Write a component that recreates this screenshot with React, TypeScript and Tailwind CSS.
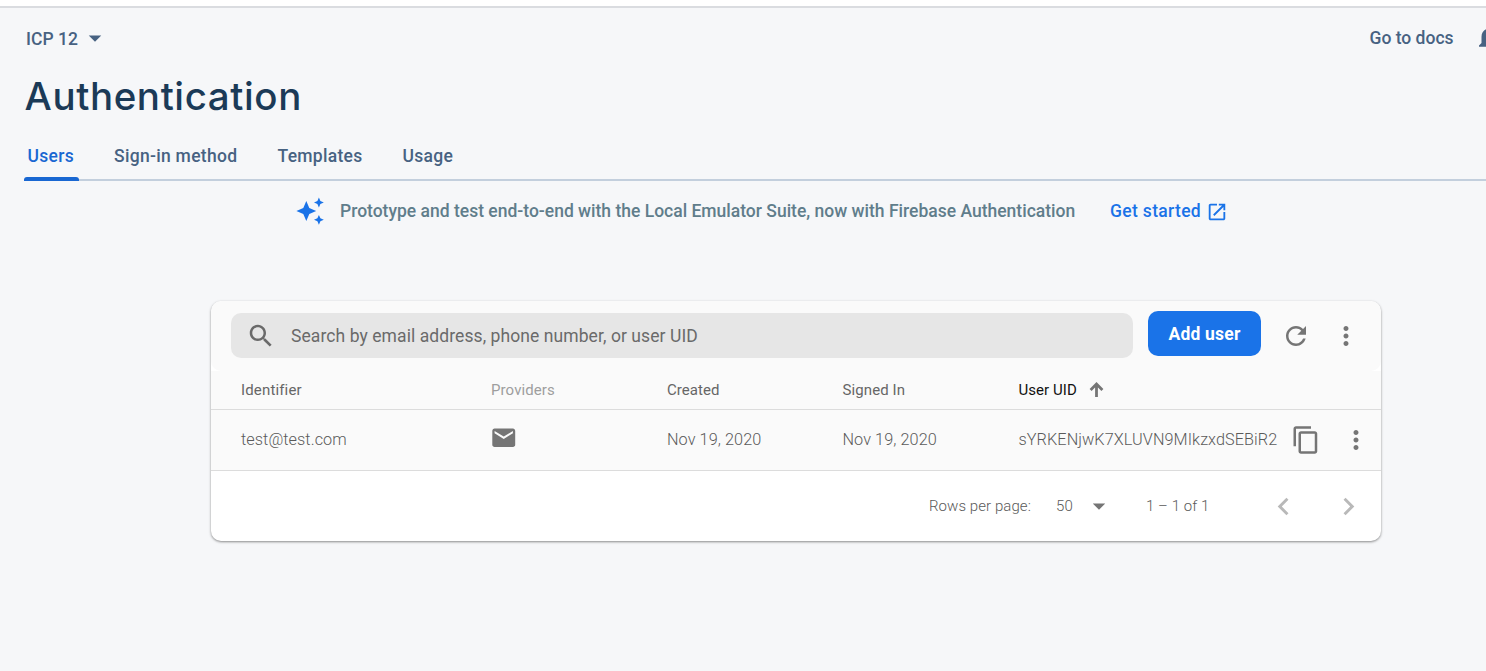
import React from "react";

function Icon({ d, className }: { d: string; className: string }) {
  return (
    <svg viewBox="0 0 24 24" fill="currentColor" className={"block shrink-0 " + className}>
      <path d={d} />
    </svg>
  );
}

const DROP = "M7 10l5 5 5-5z";
const BELL =
  "M12 22c1.1 0 2-.9 2-2h-4c0 1.1.89 2 2 2zm6-6v-5c0-3.07-1.64-5.64-4.5-6.32V4c0-.83-.67-1.5-1.5-1.5s-1.5.67-1.5 1.5v.68C7.63 5.36 6 7.92 6 11v5l-2 2v1h16v-1l-2-2z";
const OPEN =
  "M19 19H5V5h7V3H5c-1.11 0-2 .9-2 2v14c0 1.1.89 2 2 2h14c1.1 0 2-.9 2-2v-7h-2v7zM14 3v2h3.59l-9.83 9.83 1.41 1.41L19 6.41V10h2V3h-7z";
const SEARCH =
  "M15.5 14h-.79l-.28-.27C15.41 12.59 16 11.11 16 9.5 16 5.91 13.09 3 9.5 3S3 5.91 3 9.5 5.91 16 9.5 16c1.61 0 3.09-.59 4.23-1.57l.27.28v.79l5 4.99L20.49 19l-4.99-5zm-6 0C7.01 14 5 11.99 5 9.5S7.01 5 9.5 5 14 7.01 14 9.5 11.99 14 9.5 14z";
const REFRESH =
  "M17.65 6.35C16.2 4.9 14.21 4 12 4c-4.42 0-7.99 3.58-7.99 8s3.57 8 7.99 8c3.73 0 6.84-2.55 7.73-6h-2.08c-.82 2.33-3.04 4-5.65 4-3.31 0-6-2.69-6-6s2.69-6 6-6c1.66 0 3.14.69 4.22 1.78L13 11h7V4l-2.35 2.35z";
const MORE =
  "M12 8c1.1 0 2-.9 2-2s-.9-2-2-2-2 .9-2 2 .9 2 2 2zm0 2c-1.1 0-2 .9-2 2s.9 2 2 2 2-.9 2-2-.9-2-2-2zm0 6c-1.1 0-2 .9-2 2s.9 2 2 2 2-.9 2-2-.9-2-2-2z";
const MAIL =
  "M20 4H4c-1.1 0-1.99.9-1.99 2L2 18c0 1.1.9 2 2 2h16c1.1 0 2-.9 2-2V6c0-1.1-.9-2-2-2zm0 4l-8 5-8-5V6l8 5 8-5v2z";
const COPY =
  "M16 1H4c-1.1 0-2 .9-2 2v14h2V3h12V1zm3 4H8c-1.1 0-2 .9-2 2v14c0 1.1.9 2 2 2h11c1.1 0 2-.9 2-2V7c0-1.1-.9-2-2-2zm0 16H8V7h11v14z";
const LEFT = "M15.41 7.41L14 6l-6 6 6 6 1.41-1.41L10.83 12z";
const RIGHT = "M10 6L8.59 7.41 13.17 12l-4.58 4.59L10 18l6-6z";

function Sparkles() {
  return (
    <svg viewBox="0 0 28 28" fill="#1a73e8" className="block size-7 shrink-0 overflow-visible">
      <path d="M9.3 4.1L12.3 11L19.2 14L12.3 17L9.3 23.9L6.3 17L-0.6 14L6.3 11Z" />
      <path d="M21.9 0.6L23.4 4L26.8 5.5L23.4 7L21.9 10.4L20.4 7L17 5.5L20.4 4Z" />
      <path d="M21.9 17.9L23.4 21.3L26.8 22.8L23.4 24.3L21.9 27.7L20.4 24.3L17 22.8L20.4 21.3Z" />
    </svg>
  );
}

export default function App() {
  return (
    <div className="h-[671px] w-full overflow-hidden bg-[#f6f7f9] font-['Roboto',sans-serif] text-[17.5px] whitespace-nowrap">
      <div className="h-2 border-b-2 border-[#dadce0] bg-white" />
      <header className="flex h-[60px] items-center justify-between pl-[26px] font-medium text-[#476282]">
        <button className="flex items-center">
          <span className="w-[53.5px] pt-0.5 text-left tracking-[0.03px]">ICP 12</span>
          <Icon d={DROP} className="size-[30px]" />
        </button>
        <div className="flex items-center">
          <a className="w-[104px] pt-px">Go to docs</a>
          <div className="w-[12.5px] overflow-hidden">
            <Icon d={BELL} className="-mt-px size-[30px]" />
          </div>
        </div>
      </header>
      <h1 className="flex h-[58px] items-center pl-[24.5px] font-['Inter',sans-serif] text-[38.5px] font-medium tracking-[0.6px] text-[#1b3a57]">
        Authentication
      </h1>
      <nav className="ml-6 flex h-[55px] border-b-2 border-[#c3cfdd] font-medium tracking-[0.3px] text-[#476282]">
        <a className="flex h-[55px] w-[55px] flex-col justify-between pl-[3.5px] text-[#1967d2]">
          <span className="mt-[18px] leading-6">Users</span>
          <span className="-ml-[3.5px] h-1 rounded-t-[3px] bg-[#1967d2]" />
        </a>
        <a className="mt-[18px] ml-[35px] w-[163.5px] leading-6">Sign-in method</a>
        <a className="mt-[18px] w-[125px] leading-6">Templates</a>
        <a className="mt-[18px] leading-6">Usage</a>
      </nav>
      <div className="flex h-[60px] items-center pl-[297px]">
        <Sparkles />
        <span className="ml-[15px] w-[770px] font-medium text-[#607d8b]">
          Prototype and test end-to-end with the Local Emulator Suite, now with Firebase Authentication
        </span>
        <a className="flex items-center text-[#1a73e8]">
          <span className="w-[96px] font-medium tracking-[0.33px]">Get started</span>
          <Icon d={OPEN} className="mt-0.5 size-[22px]" />
        </a>
      </div>

      <section className="mt-[60px] ml-[211px] w-[1170px] overflow-hidden rounded-[10px] bg-white text-[#757575] shadow-[0_1px_3px_rgba(0,0,0,0.28),0_1px_2px_rgba(0,0,0,0.2)]">
        <div className="flex h-[70px] rounded-[10px] bg-[#fafafa] pl-5">
          <div className="mt-3 flex h-[45px] w-[902px] items-center rounded-[10px] bg-[#e6e6e6] pl-[15px] text-[#6a6a6a]">
            <Icon d={SEARCH} className="size-[30px]" />
            <span className="ml-[15px] pt-0.5 tracking-[0.08px]">Search by email address, phone number, or user UID</span>
          </div>
          <button className="mt-[10px] ml-[15px] h-[45px] w-[113px] rounded-[10px] bg-[#1a73e8] pt-0.5 font-bold tracking-[0.2px] text-white">
            Add user
          </button>
          <Icon d={REFRESH} className="mt-5 ml-5 size-[30px]" />
          <Icon d={MORE} className="mt-5 ml-5 size-[30px]" />
        </div>
        <div className="flex h-[39px] items-center border-b border-[#dcdcdc] bg-[#fafafa] pl-[30px] text-[15px]">
          <span className="w-[250px] tracking-[0.15px] text-[#666]">Identifier</span>
          <span className="w-[176px] tracking-[0.1px] text-[#9e9e9e]">Providers</span>
          <span className="w-[175.5px] tracking-[0.04px] text-[#666]">Created</span>
          <span className="w-[176px] tracking-[0.1px] text-[#666]">Signed In</span>
          <span className="w-[70.5px] tracking-[0.05px] text-[#111]">User UID</span>
          <svg viewBox="0 0 15 15" fill="none" stroke="currentColor" strokeWidth="2.8" className="-mt-0.5 block size-[15px]">
            <path d="M7.5 15V2M1.6 8L7.5 2.1L13.4 8" />
          </svg>
        </div>
        <div className="flex h-[61px] items-center border-b border-[#dcdcdc] bg-[#fafafa] pl-[30px] text-[16.25px] font-light tracking-[0.07px] text-[#5a5a5a]">
          <span className="w-[248.5px]">test@test.com</span>
          <Icon d={MAIL} className="-mt-[5px] mr-[150px] size-[27.5px] text-[#757575]" />
          <span className="w-[175.5px]">Nov 19, 2020</span>
          <span className="w-[176px]">Nov 19, 2020</span>
          <span className="w-[272.5px]">sYRKENjwK7XLUVN9MIkzxdSEBiR2</span>
          <Icon d={COPY} className="size-[30px] text-[#757575]" />
          <Icon d={MORE} className="ml-5 size-[30px] text-[#757575]" />
        </div>
        <div className="flex h-[70px] items-center pl-[718px] text-[15px] font-light tracking-[0.07px] text-[#5a5a5a]">
          <span className="w-[127px]">Rows per page:</span>
          <span className="w-[28px] pt-px">50</span>
          <Icon d={DROP} className="size-[30px] text-[#757575]" />
          <span className="ml-[32px] w-[120px]">1 – 1 of 1</span>
          <Icon d={LEFT} className="size-[35px] text-[#b9b9b9]" />
          <Icon d={RIGHT} className="ml-[30px] size-[35px] text-[#b9b9b9]" />
        </div>
      </section>
    </div>
  );
}
